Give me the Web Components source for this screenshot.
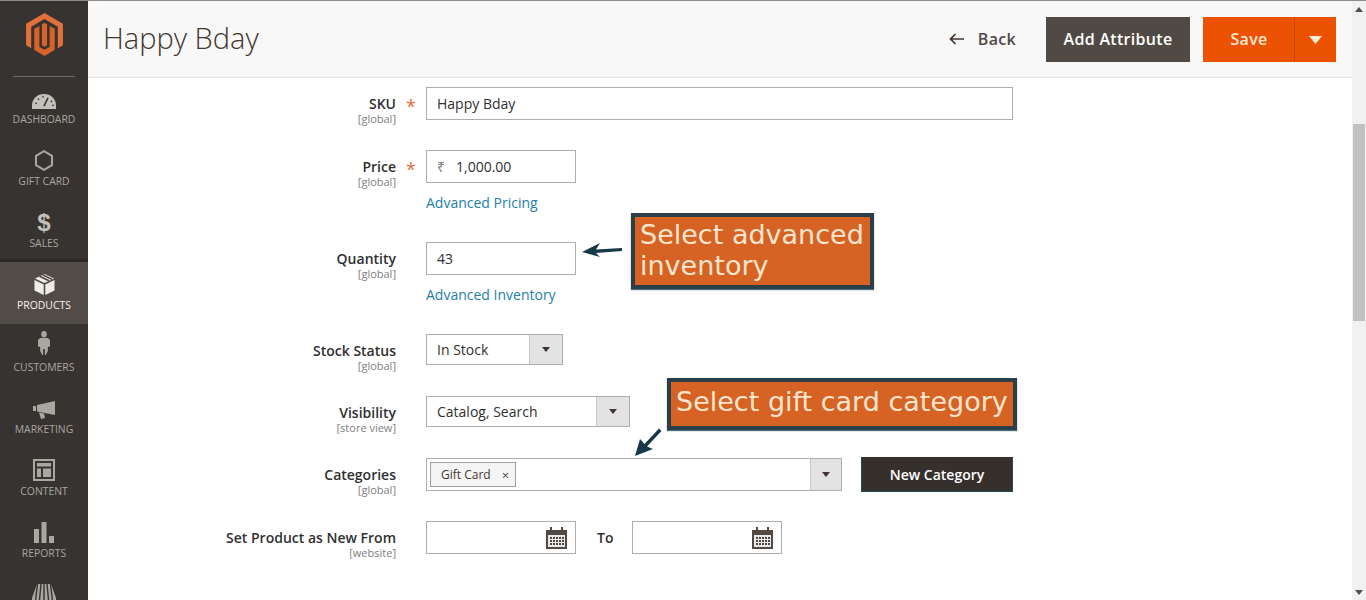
<!DOCTYPE html>
<html lang="en">
<head>
<meta charset="utf-8">
<title>Happy Bday</title>
<style>
  html, body { margin: 0; height: 100%; overflow: hidden; background: #fff; }
  body { font-family: "Open Sans", "Noto Sans", sans-serif; color: #303030; }
</style>
</head>
<body>
<mg-app>
  <mg-sidebar slot="side">
    <mg-nav-item label="DASHBOARD" icon="dashboard"></mg-nav-item>
    <mg-nav-item label="GIFT CARD" icon="hexagon"></mg-nav-item>
    <mg-nav-item label="SALES" icon="dollar"></mg-nav-item>
    <mg-nav-item label="PRODUCTS" icon="box" active></mg-nav-item>
    <mg-nav-item label="CUSTOMERS" icon="person"></mg-nav-item>
    <mg-nav-item label="MARKETING" icon="megaphone"></mg-nav-item>
    <mg-nav-item label="CONTENT" icon="layout"></mg-nav-item>
    <mg-nav-item label="REPORTS" icon="bars"></mg-nav-item>
    <mg-nav-item icon="store"></mg-nav-item>
  </mg-sidebar>

  <mg-page-header slot="head" heading="Happy Bday"></mg-page-header>

  <mg-form slot="main">
    <mg-field label="SKU" scope="[global]" required>
      <mg-input value="Happy Bday" width="587"></mg-input>
    </mg-field>
    <mg-field label="Price" scope="[global]" required>
      <mg-input value="1,000.00" prefix="₹" width="150"></mg-input>
      <mg-link>Advanced Pricing</mg-link>
    </mg-field>
    <mg-field label="Quantity" scope="[global]">
      <mg-input value="43" width="150"></mg-input>
      <mg-link>Advanced Inventory</mg-link>
    </mg-field>
    <mg-field label="Stock Status" scope="[global]">
      <mg-select value="In Stock" width="137"></mg-select>
    </mg-field>
    <mg-field label="Visibility" scope="[store view]">
      <mg-select value="Catalog, Search" width="204"></mg-select>
    </mg-field>
    <mg-field label="Categories" scope="[global]">
      <mg-category-picker></mg-category-picker>
    </mg-field>
    <mg-field label="Set Product as New From" scope="[website]">
      <mg-date-range></mg-date-range>
    </mg-field>

    <mg-callout style="left:543px;top:135px;width:243px;height:76px;padding-top:2px">Select advanced inventory</mg-callout>
    <mg-callout style="left:579px;top:300px;width:350px;height:52px;padding-top:4px">Select gift card category</mg-callout>
    <mg-arrow style="left:494px;top:164px" dir="left"></mg-arrow>
    <mg-arrow style="left:546px;top:350px" dir="down"></mg-arrow>
  </mg-form>

  <mg-scrollbar slot="scroll"></mg-scrollbar>
</mg-app>

<script>
// App shell
class MgApp extends HTMLElement {
  constructor() {
    super();
    this.attachShadow({ mode: 'open' });
    this.shadowRoot.innerHTML = `
      <style>
        :host {
          display: grid;
          grid-template-columns: 88px 1fr 14px;
          grid-template-rows: 78px 1fr;
          height: 600px;
          width: 1366px;
          overflow: hidden;
        }
        .side { grid-column: 1; grid-row: 1 / 3; display: block; min-height: 0; }
        .head { grid-column: 2; grid-row: 1; display: block; }
        .main { grid-column: 2; grid-row: 2; display: block; min-height: 0; }
        .scroll { grid-column: 3; grid-row: 1 / 3; display: block; min-height: 0; }
      </style>
      <slot name="side" class="side"></slot>
      <slot name="head" class="head"></slot>
      <slot name="main" class="main"></slot>
      <slot name="scroll" class="scroll"></slot>
    `;
  }
}

class MgSidebar extends HTMLElement {
  constructor() {
    super();
    this.attachShadow({ mode: 'open' });
    this.shadowRoot.innerHTML = `
      <style>
        :host {
          display: block;
          height: 600px;
          overflow: hidden;
          background: #373330;
          border-top: 1px solid #8d8d8d;
          box-sizing: border-box;
        }
        .logo { display: flex; justify-content: center; padding: 12px 0 20px; height: 43px; }
        .rule { height: 1px; background: #736e69; margin: 0 13px -1px; }
      </style>
      <div class="logo">
        <svg width="37" height="43" viewBox="0 0 36 42">
          <path fill="#e2703a" d="M18 0L36 10.5V31.5L31 34.4V13.4L18 5.8L5 13.4V34.4L0 31.5V10.5Z"/>
          <path fill="#d9622b" d="M18 42L8 36V15.5L13 12.6V33.2L18 36L23 33.2V12.6L28 15.5V36Z"/>
          <path fill="#d9622b" d="M15.5 11L18 9.5L20.5 11V31.5L18 33L15.5 31.5Z"/>
        </svg>
      </div>
      <div class="rule"></div>
      <slot></slot>
    `;
  }
}

const NAV_ICONS = {
  dashboard: `<svg width="24" height="16" viewBox="0 0 24 17" preserveAspectRatio="none"><path fill="#c4c0ba" d="M0 17V13A12 12 0 0 1 24 13V17Z"/><path stroke="#373330" stroke-width="1.6" d="M12 14L16 5"/><g fill="#373330"><circle cx="4" cy="11" r=".9"/><circle cx="6.5" cy="6.5" r=".9"/><circle cx="11" cy="4" r=".9"/><circle cx="19.5" cy="9" r=".9"/><circle cx="21" cy="13" r=".9"/></g></svg>`,
  hexagon: `<svg width="18" height="21" viewBox="0 0 18 21"><path fill="none" stroke="#aaa6a0" stroke-width="2" d="M9 1.2L17 5.8V15.2L9 19.8L1 15.2V5.8Z"/></svg>`,
  box: `<svg width="21" height="21" viewBox="0 0 21 21"><path fill="#f0ece6" d="M10.5 0L20 4.5L10.5 9L1 4.5Z"/><path fill="#f0ece6" d="M0.5 6L9.7 10.4V21L0.5 16.5Z"/><path fill="#f0ece6" d="M20.5 6L11.3 10.4V21L20.5 16.5Z"/><path stroke="#4d4742" stroke-width="1.6" d="M5.5 2.2L15 6.8M8.5 .8L18 5.4"/></svg>`,
  person: `<svg width="12" height="24" viewBox="0 0 14 24" preserveAspectRatio="none" style="margin-bottom:2px"><circle cx="7" cy="3.2" r="3.2" fill="#aaa6a0"/><path fill="#aaa6a0" d="M2.5 7H11.5L14 9V15.5L11.5 16V20L9 24H8V18H6V24H5L2.5 20V16L0 15.5V9Z"/></svg>`,
  megaphone: `<svg width="22" height="18" viewBox="0 0 22 18"><path fill="#aaa6a0" d="M0 5H3V10H0Z"/><path fill="#aaa6a0" d="M4 4L22 0V14L4 10.5Z"/><path fill="#aaa6a0" d="M6 11.5L11 12.5L12 17L8 18Z"/></svg>`,
  layout: `<svg width="22" height="22" viewBox="0 0 22 22"><path fill="none" stroke="#aaa6a0" stroke-width="2" d="M1 1H21V21H1Z"/><path fill="#aaa6a0" d="M4 4H18V7.5H4ZM4 9.5H8V18H4ZM10 9.5H18V18H10Z"/></svg>`,
  bars: `<svg width="20" height="21" viewBox="0 0 20 21"><path fill="#aaa6a0" d="M0 7H5V21H0ZM7.5 0H12.5V21H7.5ZM15 14H20V21H15Z"/></svg>`,
  store: `<svg width="24" height="21" viewBox="0 0 24 21"><path fill="#aaa6a0" d="M5 0H19L24 14V21H0V14Z"/><path stroke="#373330" stroke-width="1.4" d="M9 0L7 21M12 0V21M15 0L17 21M5.5 0L3 21M18.5 0L21 21"/></svg>`
};

class MgNavItem extends HTMLElement {
  constructor() {
    super();
    this.attachShadow({ mode: 'open' });
  }

  connectedCallback() {
    const label = this.getAttribute('label') || '';
    const icon = this.getAttribute('icon') || '';
    const active = this.hasAttribute('active');
    const glyph = icon === 'dollar' ? '<span class="dollar">$</span>' : NAV_ICONS[icon];

    this.shadowRoot.innerHTML = `
      <style>
        :host {
          display: flex;
          flex-direction: column;
          align-items: center;
          height: 62px;
          background: ${active ? '#524c47' : 'transparent'};
          box-sizing: border-box;
          ${active ? 'box-shadow: 0 -3px 0 #2c2825;' : ''}
        }
        .icon { height: 36px; display: flex; align-items: flex-end; justify-content: center; padding-bottom: 3px; box-sizing: border-box; }
        .dollar { font: 700 24px/28px "Liberation Sans", sans-serif; color: #c4c0ba; margin-bottom: -4px; }
        .label {
          font-size: 10.4px;
          line-height: 14px;
          color: ${active ? '#f7f3eb' : '#aaa6a0'};
          white-space: nowrap;
        }
      </style>
      <div class="icon">${glyph}</div>
      <div class="label">${label}</div>
    `;
  }
}

class MgPageHeader extends HTMLElement {
  constructor() {
    super();
    this.attachShadow({ mode: 'open' });
  }

  connectedCallback() {
    const heading = this.getAttribute('heading') || '';
    this.shadowRoot.innerHTML = `
      <style>
        :host {
          display: flex;
          align-items: center;
          height: 78px;
          box-sizing: border-box;
          background: #f8f8f8;
          border-top: 1px solid #8d8d8d;
          border-bottom: 1px solid #e3e3e3;
          padding: 0 16px 0 15px;
        }
        h1 {
          flex: 1;
          margin: 0 0 2px;
          font-size: 29px;
          font-weight: 300;
          color: #41362f;
          line-height: 36px;
        }
        .back {
          display: flex;
          align-items: center;
          gap: 14px;
          margin-right: 30px;
          font-size: 16px;
          font-weight: 600;
          letter-spacing: .3px;
          color: #514943;
        }
        button {
          font-family: inherit;
          border: 0;
          color: #fff;
          font-size: 16px;
          font-weight: 600;
          letter-spacing: .3px;
          height: 45px;
          padding: 0;
        }
        .add { width: 144px; background: #514943; margin-right: 13px; }
        .save { display: flex; background: #eb5202; height: 45px; color: #ffe9d4; font-size: 16px; font-weight: 600; letter-spacing: .3px; width: 133px; }
        .save span { width: 92px; padding-left: 1px; box-sizing: border-box; line-height: 44px; text-align: center; border-right: 1px solid #c94600; }
        .save i { flex: 1; display: flex; align-items: center; justify-content: center; padding-top: 2px; }
      </style>
      <h1>${heading}</h1>
      <div class="back">
        <svg width="15" height="12" viewBox="0 0 15 12"><path fill="none" stroke="#41362f" stroke-width="1.7" d="M15 6H2M6.5 1L1.5 6L6.5 11"/></svg>
        Back
      </div>
      <button class="add">Add Attribute</button>
      <div class="save"><span>Save</span><i><svg width="13" height="8" viewBox="0 0 13 9" preserveAspectRatio="none"><path fill="#ffeedd" d="M0 0H13L6.5 9Z"/></svg></i></div>
    `;
  }
}

class MgForm extends HTMLElement {
  constructor() {
    super();
    this.attachShadow({ mode: 'open' });
    this.shadowRoot.innerHTML = `
      <style>
        :host {
          display: flex;
          flex-direction: column;
          gap: 30px;
          position: relative;
          height: 522px;
          padding-top: 9px;
          box-sizing: border-box;
          overflow: hidden;
          background: #fff;
        }
      </style>
      <slot></slot>
    `;
  }
}

class MgField extends HTMLElement {
  constructor() {
    super();
    this.attachShadow({ mode: 'open' });
  }

  connectedCallback() {
    const label = this.getAttribute('label') || '';
    const scope = this.getAttribute('scope') || '';
    const required = this.hasAttribute('required');

    // label box is kept short so the scope line can hang below the control
    this.shadowRoot.innerHTML = `
      <style>
        :host { display: grid; grid-template-columns: 308px 30px 1fr; }
        .label { text-align: right; padding-top: 7px; height: 24px; }
        .name { font-size: 14px; line-height: 19px; font-weight: 600; color: #303030; white-space: nowrap; }
        .scope { font-size: 11px; line-height: 12px; color: #808080; }
        .star { padding: 8px 0 0 10px; height: 24px; font-size: 18px; line-height: 22px; color: #e2703a; }
        .control { display: flex; flex-direction: column; align-items: flex-start; }
      </style>
      <div class="label">
        <div class="name">${label}</div>
        <div class="scope">${scope}</div>
      </div>
      <div class="star">${required ? '*' : ''}</div>
      <div class="control"><slot></slot></div>
    `;
  }
}

class MgInput extends HTMLElement {
  constructor() {
    super();
    this.attachShadow({ mode: 'open' });
  }

  connectedCallback() {
    const value = this.getAttribute('value') || '';
    const prefix = this.getAttribute('prefix') || '';
    const width = this.getAttribute('width') || '150';

    this.shadowRoot.innerHTML = `
      <style>
        :host {
          display: flex;
          align-items: center;
          width: ${width}px;
          height: 33px;
          box-sizing: border-box;
          border: 1px solid #adadad;
          padding: 0 10px;
          background: #fff;
          font-size: 14px;
          color: #303030;
        }
        .prefix { width: 19px; color: #808080; font-size: 14px; font-family: "Noto Sans", "DejaVu Sans", sans-serif; }
      </style>
      ${prefix ? `<span class="prefix">${prefix}</span>` : ''}
      <span>${value}</span>
    `;
  }
}

class MgLink extends HTMLElement {
  constructor() {
    super();
    this.attachShadow({ mode: 'open' });
    this.shadowRoot.innerHTML = `
      <style>
        :host { display: block; margin-top: 10px; font-size: 14px; line-height: 19px; color: #2280a8; }
      </style>
      <slot></slot>
    `;
  }
}

const CARET = `<svg width="8" height="5" viewBox="0 0 8 5"><path fill="#41362f" d="M0 0H8L4 5Z"/></svg>`;

class MgSelect extends HTMLElement {
  constructor() {
    super();
    this.attachShadow({ mode: 'open' });
  }

  connectedCallback() {
    const value = this.getAttribute('value') || '';
    const width = this.getAttribute('width') || '150';

    this.shadowRoot.innerHTML = `
      <style>
        :host {
          display: flex;
          width: ${width}px;
          height: 31px;
          margin-bottom: 1px;
          box-sizing: border-box;
          border: 1px solid #adadad;
          background: #fff;
          font-size: 14px;
          color: #303030;
        }
        .value { flex: 1; padding-left: 10px; line-height: 29px; }
        .arrow {
          width: 33px;
          background: #e3e3e3;
          border-left: 1px solid #c8c8c8;
          display: flex;
          align-items: center;
          justify-content: center;
          box-sizing: border-box;
        }
      </style>
      <div class="value">${value}</div>
      <div class="arrow">${CARET}</div>
    `;
  }
}

class MgCategoryPicker extends HTMLElement {
  constructor() {
    super();
    this.attachShadow({ mode: 'open' });
    this.shadowRoot.innerHTML = `
      <style>
        :host { display: flex; align-items: center; gap: 19px; height: 33px; }
        .box {
          display: flex;
          width: 416px;
          height: 33px;
          box-sizing: border-box;
          border: 1px solid #adadad;
          background: #fff;
        }
        .tags { flex: 1; padding: 3px; }
        .tag {
          display: inline-flex;
          align-items: center;
          gap: 11px;
          width: 86px;
          height: 25px;
          box-sizing: border-box;
          padding-left: 10px;
          background: #f5f5f5;
          border: 1px solid #a79d95;
          font-size: 12px;
          color: #41362f;
        }
        .tag b { font-weight: 400; font-size: 13px; color: #514943; }
        .arrow {
          width: 30px;
          background: #e3e3e3;
          border-left: 1px solid #c8c8c8;
          display: flex;
          align-items: center;
          justify-content: center;
        }
        button {
          width: 152px;
          height: 35px;
          margin: 0;
          padding: 0;
          font-family: inherit;
          font-size: 14px;
          font-weight: 600;
          color: #fff;
          background: #35302c;
          border: 1px solid #1f4a58;
          border-color: #35302c #1f4a58 #1f4a58 #1f4a58;
        }
      </style>
      <div class="box">
        <div class="tags"><span class="tag">Gift Card <b>×</b></span></div>
        <div class="arrow">${CARET}</div>
      </div>
      <button>New Category</button>
    `;
  }
}

class MgDateRange extends HTMLElement {
  constructor() {
    super();
    this.attachShadow({ mode: 'open' });
    const cal = `<svg width="21" height="22" viewBox="0 0 21 22">
      <path fill="#514943" d="M0 3H4V0H6V3H15V0H17V3H21V22H0Z"/>
      <path fill="#e9e9e9" d="M2 8H19V20H2Z"/>
      <g fill="#514943">
        ${[10, 13, 16].map(y => [4, 7, 10, 13, 16].map(x => `<rect x="${x}" y="${y}" width="2" height="2"/>`).join('')).join('')}
      </g>
    </svg>`;
    this.shadowRoot.innerHTML = `
      <style>
        :host { display: flex; align-items: center; height: 33px; }
        .date {
          display: flex;
          align-items: center;
          justify-content: flex-end;
          width: 150px;
          height: 33px;
          box-sizing: border-box;
          border: 1px solid #adadad;
          padding-right: 8px;
          background: #fff;
        }
        .to { width: 56px; padding-left: 21px; box-sizing: border-box; font-size: 14px; font-weight: 600; color: #303030; }
      </style>
      <div class="date">${cal}</div>
      <div class="to">To</div>
      <div class="date">${cal}</div>
    `;
  }
}

class MgCallout extends HTMLElement {
  constructor() {
    super();
    this.attachShadow({ mode: 'open' });
    this.shadowRoot.innerHTML = `
      <style>
        :host {
          position: absolute;
          box-sizing: border-box;
          border: 4px solid #2a3f48;
          background: #d66223;
          padding: 3px 0 0 5px;
          font-family: "DejaVu Sans", sans-serif;
          font-size: 27px;
          line-height: 31px;
          color: #fde6cf;
          box-shadow: 0 1px 1px #4f6f7d;
        }
      </style>
      <slot></slot>
    `;
  }
}

class MgArrow extends HTMLElement {
  constructor() {
    super();
    this.attachShadow({ mode: 'open' });
  }

  connectedCallback() {
    const shape = this.getAttribute('dir') === 'left'
      ? `<svg width="40" height="16" viewBox="0 0 40 16"><path fill="#16394a" d="M0 10L18 1L14 7.5L40 6V9L14 11L18 15Z"/></svg>`
      : `<svg width="28" height="28" viewBox="0 0 28 28"><path fill="#16394a" d="M1 28L6 11L10.5 16L25 .5L27.5 3L13 18.5L19 21Z"/></svg>`;
    this.shadowRoot.innerHTML = `
      <style>
        :host { position: absolute; display: block; line-height: 0; }
      </style>
      ${shape}
    `;
  }
}

class MgScrollbar extends HTMLElement {
  constructor() {
    super();
    this.attachShadow({ mode: 'open' });
    this.shadowRoot.innerHTML = `
      <style>
        :host {
          display: flex;
          flex-direction: column;
          align-items: center;
          height: 600px;
          box-sizing: border-box;
          background: #f1f1f1;
          border-top: 1px solid #8d8d8d;
        }
        .btn { height: 16px; display: flex; align-items: center; justify-content: center; }
        .track { flex: 1; width: 100%; padding-top: 107px; box-sizing: border-box; }
        .thumb { height: 197px; margin: 0 1px; background: #c1c1c1; }
      </style>
      <div class="btn"><svg width="8" height="5" viewBox="0 0 8 5"><path fill="#505050" d="M0 5H8L4 0Z"/></svg></div>
      <div class="track"><div class="thumb"></div></div>
      <div class="btn"><svg width="8" height="5" viewBox="0 0 8 5"><path fill="#505050" d="M0 0H8L4 5Z"/></svg></div>
    `;
  }
}

customElements.define('mg-app', MgApp);
customElements.define('mg-sidebar', MgSidebar);
customElements.define('mg-nav-item', MgNavItem);
customElements.define('mg-page-header', MgPageHeader);
customElements.define('mg-form', MgForm);
customElements.define('mg-field', MgField);
customElements.define('mg-input', MgInput);
customElements.define('mg-link', MgLink);
customElements.define('mg-select', MgSelect);
customElements.define('mg-category-picker', MgCategoryPicker);
customElements.define('mg-date-range', MgDateRange);
customElements.define('mg-callout', MgCallout);
customElements.define('mg-arrow', MgArrow);
customElements.define('mg-scrollbar', MgScrollbar);
</script>
</body>
</html>
